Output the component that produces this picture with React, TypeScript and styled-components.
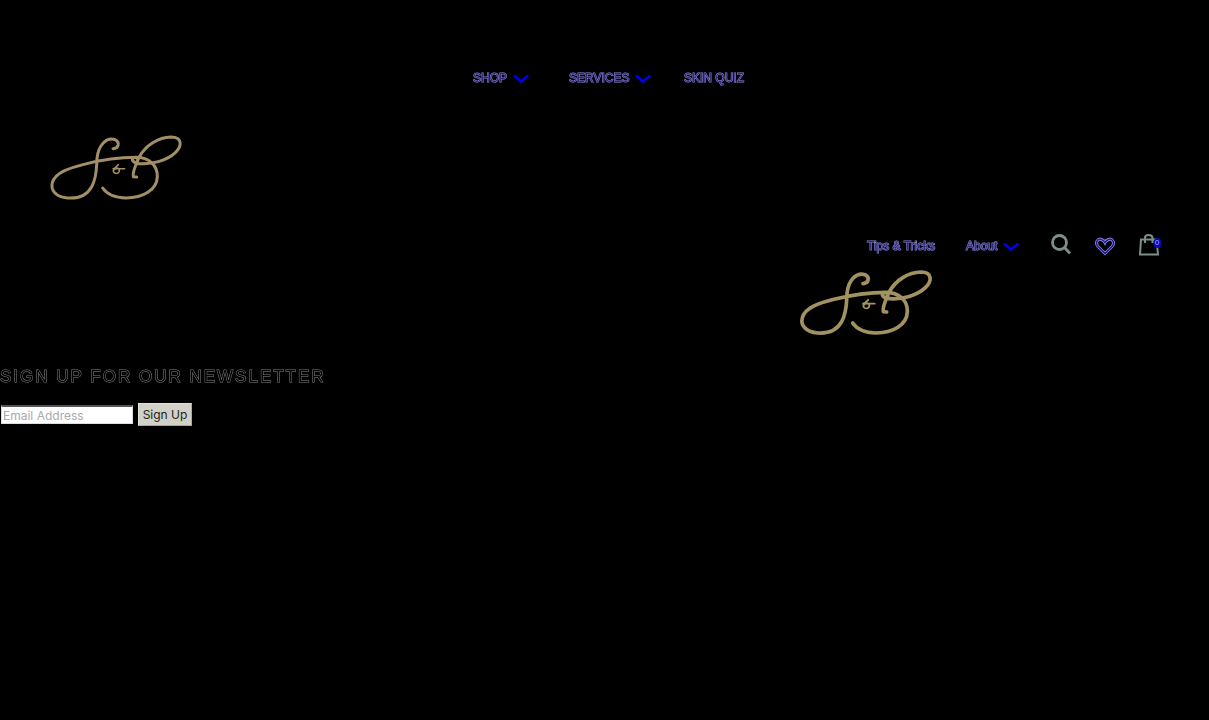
import React from "react";
import styled, { createGlobalStyle } from "styled-components";

const GlobalStyle = createGlobalStyle`
  *, *::before, *::after { box-sizing: border-box; }
  html { background: #000; }
  body { margin: 0; font-family: "Liberation Sans", Arial, sans-serif; font-size: 13px; }
`;

const Header = styled.header`
  display: flex;
  flex-direction: column;
  padding-top: 66px;
`;

const MainNav = styled.nav`
  display: flex;
  justify-content: center;
  align-items: center;
  gap: 32px;
  height: 24px;
  padding-left: 8px;
`;

const NavLink = styled.a<{ $gap?: number }>`
  display: inline-flex;
  align-items: center;
  gap: 6px;
  margin-right: ${(p) => p.$gap ?? 0}px;
  color: #302a80;
  font-size: 12px;
  line-height: 24px;
  white-space: nowrap;
  text-decoration: none;
  -webkit-text-stroke: 1px #8f8ae0;
  paint-order: stroke fill;
  will-change: transform;
`;

const LogoLink = styled.a<{ $raised?: boolean }>`
  display: block;
  width: 150px;
  height: 85px;
  margin: ${(p) => (p.$raised ? "-6px 0 0" : "35px 0 0 40px")};
`;

const Utility = styled.div`
  align-self: flex-end;
  width: 419px;
  padding-top: 16px;
`;

const UtilityNav = styled.nav`
  display: flex;
  align-items: center;
  height: 40px;
  padding-left: 77px;
  gap: 31px;
`;

const IconButton = styled.button`
  display: flex;
  padding: 0;
  border: 0;
  margin-bottom: 2px;
  background: none;
`;

const IconLink = styled.a`
  display: flex;
  position: relative;
  margin-left: -7px;
`;

const BagLink = styled(IconLink)`
  margin-bottom: 2px;
`;

const Count = styled.span`
  position: absolute;
  top: 5px;
  right: 0;
  width: 7px;
  height: 10px;
  border-radius: 4px;
  background: #0909c4;
  color: #a5a5ee;
  font-size: 8px;
  line-height: 10px;
  text-align: center;
`;

const Newsletter = styled.section`
  padding-top: 20px;
`;

const Title = styled.h2`
  margin: 0;
  color: #000;
  font-size: 17px;
  font-weight: 400;
  line-height: 24px;
  letter-spacing: 2px;
  white-space: nowrap;
  -webkit-text-stroke: 1px #808080;
  paint-order: stroke fill;
  will-change: transform;
`;

const Form = styled.form`
  display: flex;
  align-items: center;
  gap: 5px;
  margin-top: 14px;
  padding-left: 1px;
`;

const Email = styled.input`
  width: 132px;
  height: 19px;
  padding: 0 1px;
  border: 1px solid #ddd;
  border-top: 2px solid #555;
  border-radius: 0;
  background: #fff;
  font: 12px/15px Inter, "Liberation Sans", sans-serif;
  &::placeholder { color: #aaa; opacity: 1; }
`;

const Submit = styled.button`
  width: 54px;
  height: 23px;
  padding: 0;
  border: 1px solid #e2e2d8;
  border-right-color: #aaa9a1;
  border-bottom-color: #aaa9a1;
  border-radius: 0;
  background: #d2d1c7;
  color: #222;
  font: 12px/20px Inter, "Liberation Sans", sans-serif;
`;

const Chevron = () => (
  <svg width="16" height="10" viewBox="0 0 16 10" fill="none" aria-hidden="true">
    <path d="M1 2.500 8 8.500l7-6" stroke="#0000e6" strokeWidth="2.800" />
  </svg>
);

const Logo = ({ color, weight }: { color: string; weight: number }) => (
  <svg width="150" height="85" viewBox="0 0 450 255" fill="none" stroke={color} strokeWidth={weight} strokeLinecap="round" strokeLinejoin="round" aria-hidden="true">
    <path d="M219 71C236 70 241 52 225 44C199 35 175 61 171 100C169 126 172 154 155 185C139 214 112 221 83 219C47 217 31 195 37 173C45 143 87 129 132 118C183 105 240 97 288 97C326 97 353 120 352 155C351 195 309 219 258 219C222 218 200 207 188 189" />
    <path d="M290 156L280 155C276 143 287 119 297 97C317 60 355 37 393 36C427 36 427 63 406 83C382 106 337 119 299 116C279 115 271 102 282 98C294 95 298 110 286 114" />
    <path d="M235 119C228 124 225 129 224 134M219 131C226 128 237 128 238 135C239 144 231 147 224 144C217 140 219 131 228 131H254" strokeWidth={weight / 2} />
  </svg>
);

const heart = "M10 17.500 3 10.500C-.5 6.500 3 2 6.500 3.500 8.500 4.300 9.300 5 10 6.500 10.700 5 11.500 4.300 13.500 3.500 17 2 20.500 6.500 17 10.500Z";

export default function App() {
  return (
    <>
      <GlobalStyle />
      <Header>
        <MainNav aria-label="Main">
          <NavLink href="#shop" $gap={8}>SHOP <Chevron /></NavLink>
          <NavLink href="#services">SERVICES <Chevron /></NavLink>
          <NavLink href="#quiz">SKIN QUIZ</NavLink>
        </MainNav>
        <LogoLink href="#home" aria-label="Home"><Logo color="#a28f68" weight={9} /></LogoLink>
        <Utility>
          <UtilityNav aria-label="Secondary">
            <NavLink href="#tips">Tips &amp; Tricks</NavLink>
            <NavLink href="#about">About <Chevron /></NavLink>
            <IconButton type="button" aria-label="Search">
              <svg width="20" height="24" viewBox="0 0 20 24" fill="none" stroke="#7d8f8b" strokeWidth="2.800">
                <circle cx="8.500" cy="9.500" r="7" /><path d="m13.500 14.500 5.500 6" />
              </svg>
            </IconButton>
            <IconLink href="#wishlist" aria-label="Wishlist">
              <svg width="20" height="20" viewBox="0 0 20 20" fill="none">
                <path d={heart} stroke="#8782d8" strokeWidth="3" />
                <path d={heart} stroke="#1c1688" strokeWidth="1.300" />
              </svg>
            </IconLink>
            <BagLink href="#bag" aria-label="Bag">
              <svg width="22" height="24" viewBox="0 0 22 24" fill="none" stroke="#7d8f8b" strokeWidth="2">
                <path d="M2 6.500h15.500L19 21.500H1L2 6.500ZM6 10V4.500Q6 2 9.500 2T13.500 4.500V10" />
              </svg>
              <Count>0</Count>
            </BagLink>
          </UtilityNav>
          <LogoLink href="#home" aria-label="Home" $raised><Logo color="#a39261" weight={11} /></LogoLink>
        </Utility>
      </Header>
      <Newsletter>
        <Title>SIGN UP FOR OUR NEWSLETTER</Title>
        <Form>
          <Email type="email" placeholder="Email Address" aria-label="Email Address" />
          <Submit type="submit">Sign Up</Submit>
        </Form>
      </Newsletter>
    </>
  );
}
